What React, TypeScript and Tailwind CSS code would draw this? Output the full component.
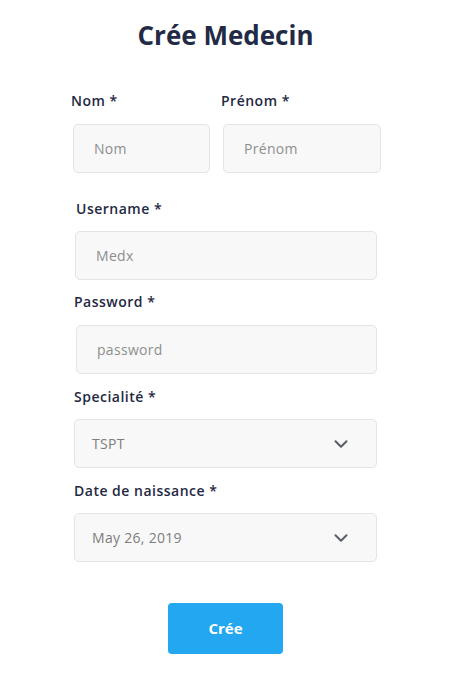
import React from "react";

const font = { fontFamily: '"Open Sans", "Liberation Sans", sans-serif' };

const Chevron = () => (
  <svg width="14" height="8" viewBox="0 0 14 8" fill="none" stroke="#5a5f6a" strokeWidth="2" strokeLinecap="round" strokeLinejoin="round">
    <path d="M1.5 1.2l5.5 5.6 5.5-5.6" />
  </svg>
);

const Label = ({ children, className = "" }: { children: React.ReactNode; className?: string }) => (
  <label className={`block h-5 leading-5 text-[14px] font-semibold tracking-[0.5px] text-[#1f2942] ${className}`}>{children}</label>
);

const Field = ({ placeholder, className = "" }: { placeholder: string; className?: string }) => (
  <input
    placeholder={placeholder}
    className={`block h-[49px] rounded-[5px] border border-[#e4e4e4] bg-[#f8f8f8] pl-[20px] text-[14px] tracking-[0.3px] text-[#555] placeholder:text-[#8e8e8e] outline-none ${className}`}
  />
);

const Select = ({ value, className = "" }: { value: string; className?: string }) => (
  <div className={`flex h-[49px] items-center justify-between rounded-[5px] border border-[#e4e4e4] bg-[#f8f8f8] pl-[17px] pr-[28px] ${className}`}>
    <span className="text-[14px] tracking-[0.3px] text-[#7d7d7d]">{value}</span>
    <Chevron />
  </div>
);

export default function App() {
  return (
    <div className="min-h-[673px] w-[451px] bg-white pt-[19px]" style={font}>
      <h1 className="text-center text-[26px] leading-[32px] font-bold text-[#232a45]">Crée Medecin</h1>

      <div className="mt-[40px] flex">
        <div className="ml-[71px] w-[150px]">
          <Label>Nom *</Label>
          <Field placeholder="Nom" className="ml-[2px] mt-[13px] w-[137px]" />
        </div>
        <div>
          <Label>Prénom *</Label>
          <Field placeholder="Prénom" className="ml-[2px] mt-[13px] w-[158px]" />
        </div>
      </div>

      <div className="mt-[26px] ml-[74px] w-[303px]">
        <Label className="ml-[2px]">Username *</Label>
        <Field placeholder="Medx" className="ml-[1px] mt-[12px] w-[302px]" />

        <Label className="mt-[12px]">Password *</Label>
        <Field placeholder="password" className="ml-[2px] mt-[13px] w-[301px]" />

        <Label className="mt-[13px]">Specialité *</Label>
        <Select value="TSPT" className="mt-[12px] w-[303px]" />

        <Label className="mt-[13px]">Date de naissance *</Label>
        <Select value="May 26, 2019" className="mt-[12px] w-[303px]" />
      </div>

      <div className="mt-[41px] flex justify-center">
        <button className="h-[51px] w-[115px] rounded-[4px] bg-[#22a7f0] text-[15px] font-bold text-white">Crée</button>
      </div>
    </div>
  );
}
